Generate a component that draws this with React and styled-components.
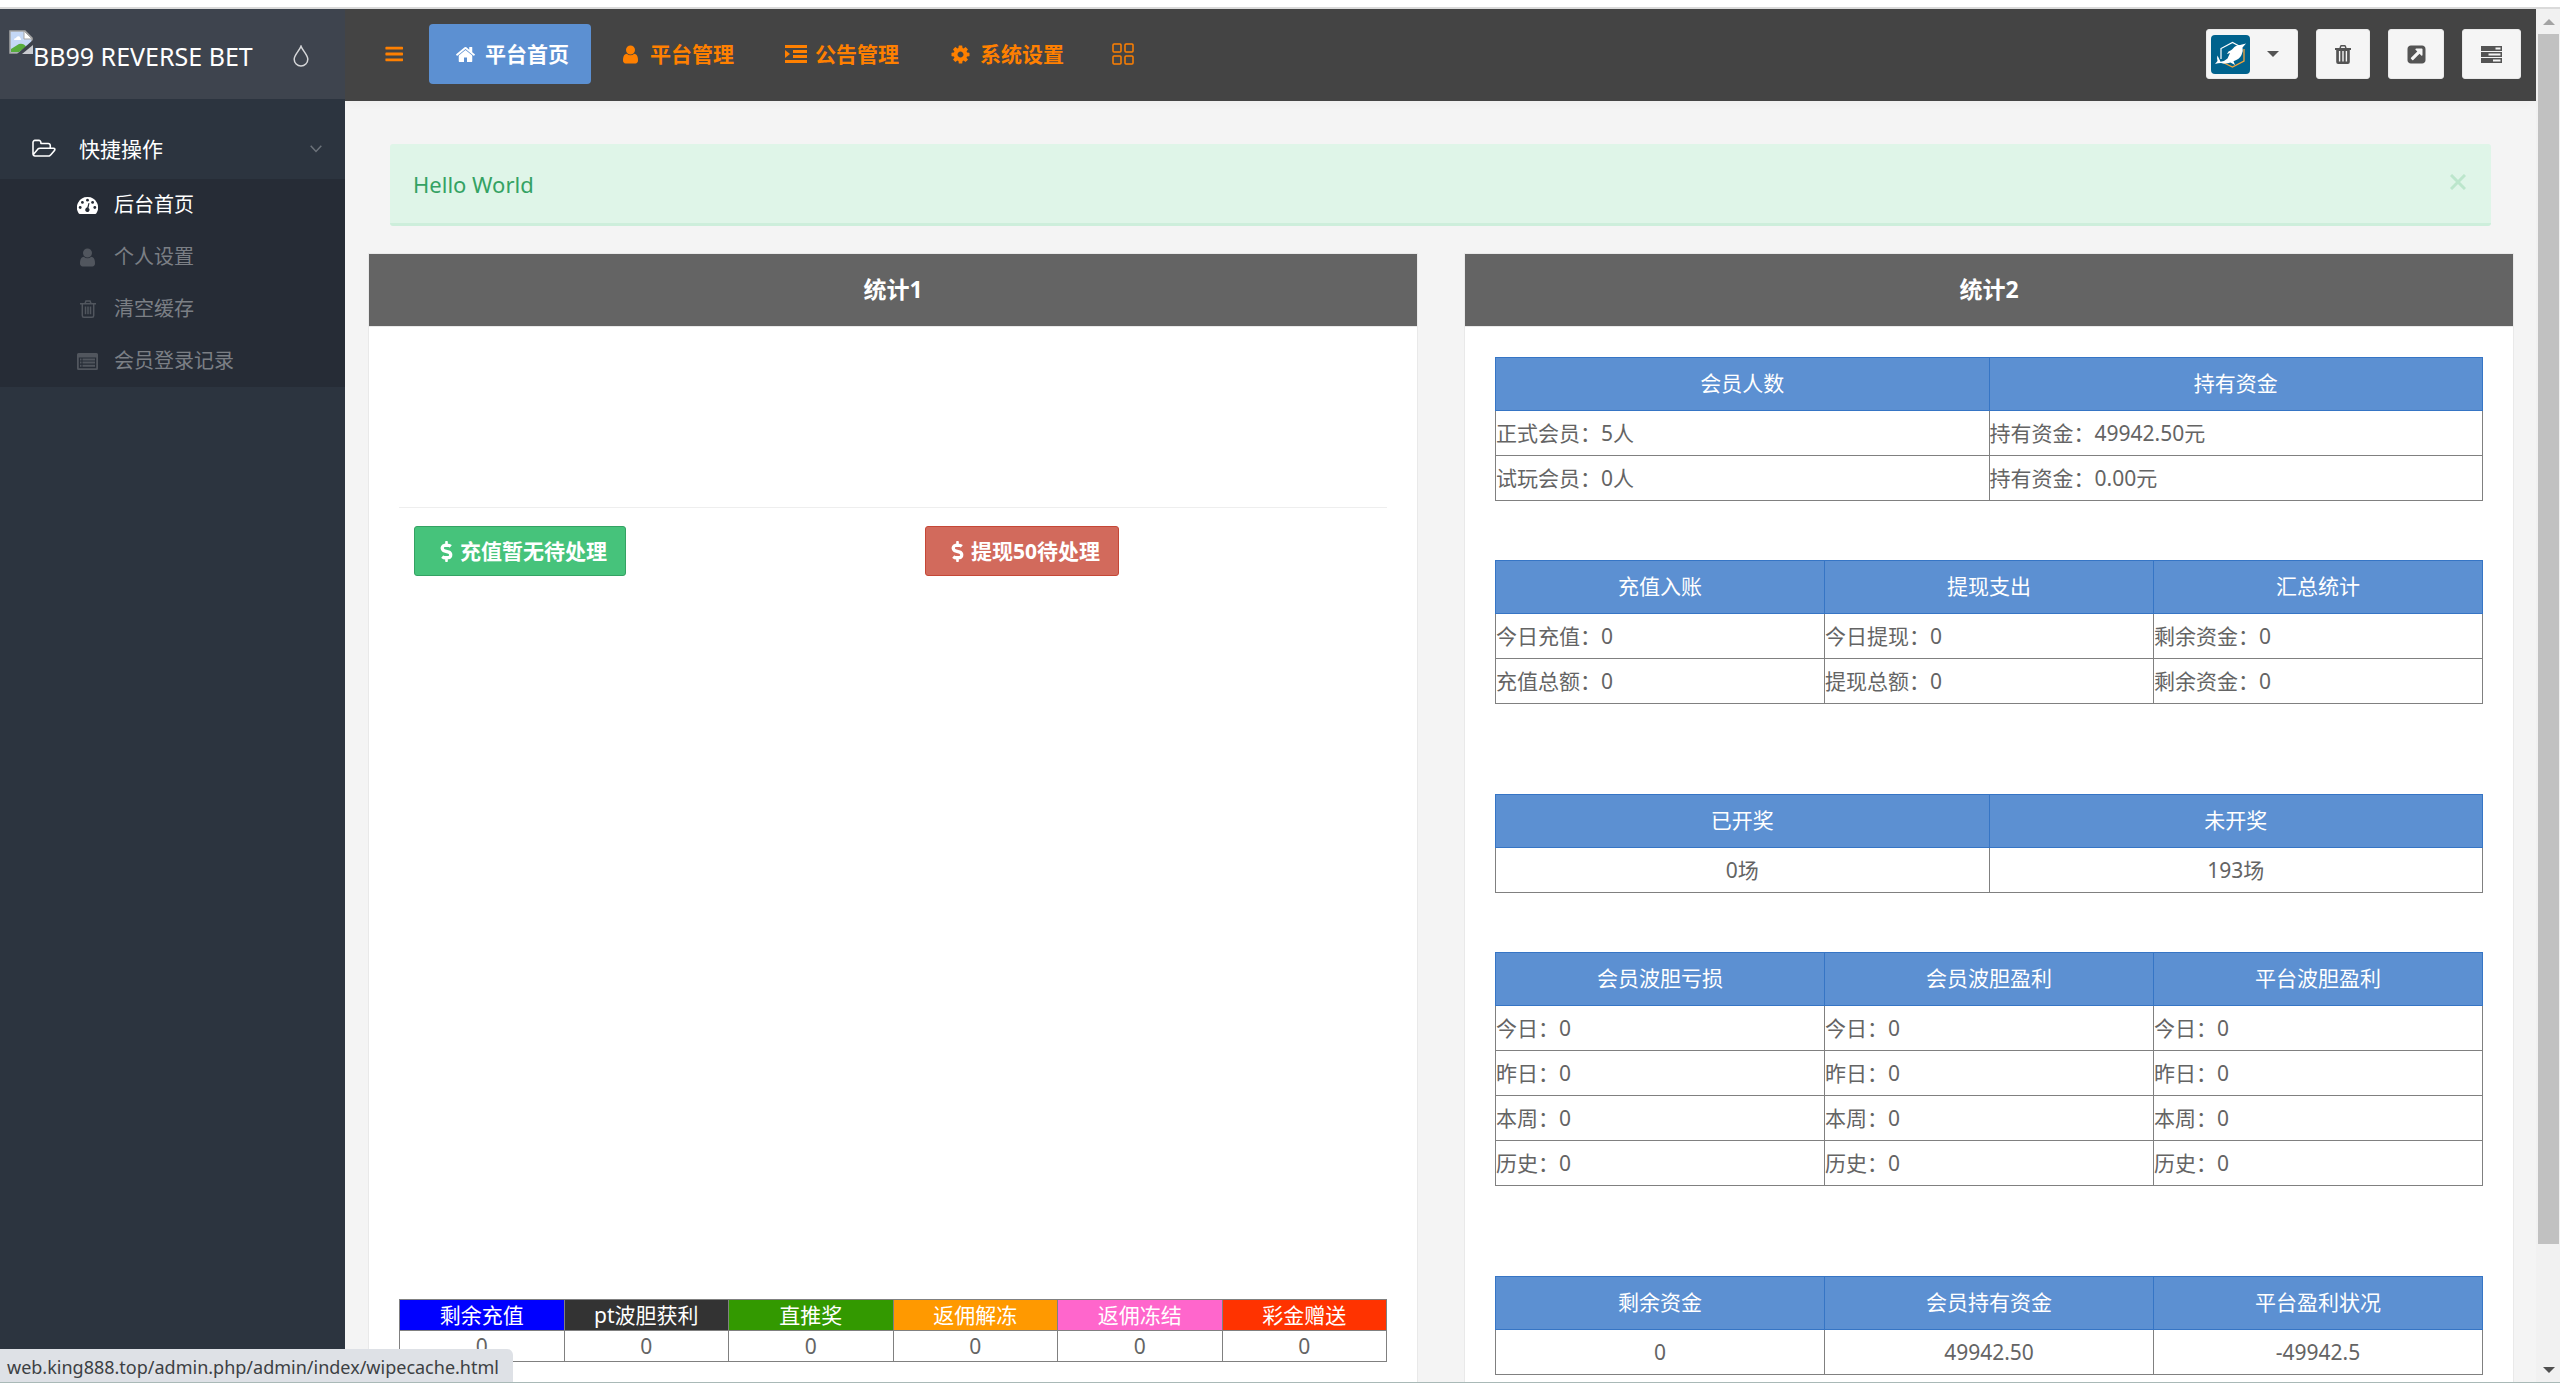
import React from "react";
import styled, { createGlobalStyle, css } from "styled-components";
import { FaDollarSign } from "react-icons/fa";

const GlobalStyle = createGlobalStyle`
  *, *::before, *::after { box-sizing: border-box; }
  body {
    margin: 0;
    background: #fff;
    color: #646464;
    font-family: "Noto Sans", "Noto Sans CJK SC", sans-serif;
    font-size: 21px;
    line-height: 30px;
  }
  button { font: inherit; cursor: pointer; }
  a { color: inherit; text-decoration: none; }
  ul { list-style: none; margin: 0; padding: 0; }
`;

/* ---------- icons ---------- */

const Glyph = styled.svg`
  display: block;
  flex: none;
  fill: currentColor;
`;

const Fixed = styled.span`
  display: flex;
  flex: none;
  justify-content: center;
  width: 27px;
`;

const FA = {
  home: "M1472 992v480q0 26-19 45t-45 19h-384v-384h-256v384h-384q-26 0-45-19t-19-45v-480q0-1 .5-3t.5-3l575-474 575 474q1 2 1 6zm223-69l-62 74q-8 9-21 11h-3q-13 0-21-7l-692-577-692 577q-12 8-24 7-13-2-21-11l-62-74q-8-10-7-23.5t11-21.5l719-599q32-26 76-26t76 26l244 204v-195q0-14 9-23t23-9h192q14 0 23 9t9 23v408l219 182q10 8 11 21.5t-7 23.5z",
  user: "M1536 1399q0 109-62.5 187t-150.5 78h-854q-88 0-150.5-78t-62.5-187q0-85 8.5-160.5t31.5-152 58.5-131 94-89 134.5-34.5q131 128 313 128t313-128q76 0 134.5 34.5t94 89 58.5 131 31.5 152 8.5 160.5zm-256-887q0 159-112.5 271.5t-271.5 112.5-271.5-112.5-112.5-271.5 112.5-271.5 271.5-112.5 271.5 112.5 112.5 271.5z",
  bars: "M1664 1344v128q0 26-19 45t-45 19h-1408q-26 0-45-19t-19-45v-128q0-26 19-45t45-19h1408q26 0 45 19t19 45zm0-512v128q0 26-19 45t-45 19h-1408q-26 0-45-19t-19-45v-128q0-26 19-45t45-19h1408q26 0 45 19t19 45zm0-512v128q0 26-19 45t-45 19h-1408q-26 0-45-19t-19-45v-128q0-26 19-45t45-19h1408q26 0 45 19t19 45z",
  cog: "M1152 896q0-106-75-181t-181-75-181 75-75 181 75 181 181 75 181-75 75-181zm512-109v222q0 12-8 23t-20 13l-185 28q-19 54-39 91 35 50 107 138 10 12 10 25t-9 23q-27 37-99 108t-94 71q-12 0-26-9l-138-108q-44 23-91 38-16 136-29 186-7 28-36 28h-222q-14 0-24.5-8.5t-11.5-21.5l-28-184q-49-16-90-37l-141 107q-10 9-25 9-14 0-25-11-126-114-165-168-7-10-7-23 0-12 8-23 15-21 51-66.5t54-70.5q-27-50-41-99l-183-27q-13-2-21-12.5t-8-23.5v-222q0-12 8-23t19-13l186-28q14-46 39-92-40-57-107-138-10-12-10-24 0-10 9-23 26-36 98.5-107.5t94.5-71.5q13 0 26 10l138 107q44-23 91-38 16-136 29-186 7-28 36-28h222q14 0 24.5 8.5t11.5 21.5l28 184q49 16 90 37l142-107q9-9 24-9 13 0 25 10 129 119 165 170 7 8 7 22 0 12-8 23-15 21-51 66.5t-54 70.5q26 50 41 98l183 28q13 2 21 12.5t8 23.5z",
  folder: "M1717 931q0-35-53-35h-1088q-40 0-85.5 21.5t-71.5 52.5l-294 363q-18 24-18 40 0 35 53 35h1088q40 0 86-22t71-53l294-363q18-22 18-39zm-1141-163h768v-160q0-40-28-68t-68-28h-576q-40 0-68-28t-28-68v-64q0-40-28-68t-68-28h-320q-40 0-68 28t-28 68v853l256-315q44-53 116-87.5t140-34.5zm1269 163q0 62-46 120l-295 363q-43 53-116 87.5t-140 34.5h-1088q-92 0-158-66t-66-158v-960q0-92 66-158t158-66h320q92 0 158 66t66 158v32h544q92 0 158 66t66 158v160h192q54 0 99 24.5t67 70.5q15 32 15 68z",
  external: "M1408 928v-480q0-26-19-45t-45-19h-480q-42 0-59 39-17 41 14 70l144 144-534 534q-19 19-19 45t19 45l102 102q19 19 45 19t45-19l534-534 144 144q18 19 45 19 12 0 25-5 39-17 39-59zm256-512v960q0 119-84.5 203.5t-203.5 84.5h-960q-119 0-203.5-84.5t-84.5-203.5v-960q0-119 84.5-203.5t203.5-84.5h960q119 0 203.5 84.5t84.5 203.5z",
};

const FaGlyph = ({ name, size = 21, box = "0 0 1792 1792", width }) => (
  <Glyph width={width || size} height={size} viewBox={box} aria-hidden="true">
    <path d={FA[name]} />
  </Glyph>
);

const IndentIcon = () => (
  <Glyph width="22" height="18" viewBox="0 0 22 18" aria-hidden="true">
    <path d="M0 0h22v3H0zM8 5h14v3H8zM8 10h14v3H8zM0 15h22v3H0zM0 5l5 4-5 4z" />
  </Glyph>
);

const GridIcon = () => (
  <Glyph width="22" height="22" viewBox="0 0 22 22" aria-hidden="true">
    <g fill="none" stroke="currentColor" strokeWidth="1.5">
      <rect x="1" y="1" width="8" height="8" rx="1" />
      <rect x="13" y="1" width="8" height="8" rx="1" />
      <rect x="1" y="13" width="8" height="8" rx="1" />
      <rect x="13" y="13" width="8" height="8" rx="1" />
    </g>
  </Glyph>
);

const DropIcon = () => (
  <Glyph width="16" height="22" viewBox="0 0 16 22" aria-hidden="true">
    <path
      d="M8 1.2C6.4 5.6 1.2 9.8 1.2 14.2a6.8 6.8 0 0 0 13.6 0C14.8 9.8 9.6 5.6 8 1.2z"
      fill="none"
      stroke="currentColor"
      strokeWidth="1.5"
    />
  </Glyph>
);

const GaugeIcon = () => (
  <Glyph width="21" height="17" viewBox="0 0 21 17" aria-hidden="true">
    <path d="M10.5 0A10.5 10.5 0 0 0 1.6 16.2Q2 17 2.8 17H18.2Q19 17 19.4 16.2A10.5 10.5 0 0 0 10.5 0z" />
    <g fill="#262c36">
      <circle cx="3.2" cy="10.5" r="1.4" />
      <circle cx="5.4" cy="5.4" r="1.4" />
      <circle cx="10.5" cy="3.2" r="1.4" />
      <circle cx="15.6" cy="5.4" r="1.4" />
      <circle cx="17.8" cy="10.5" r="1.4" />
      <path d="M11.5 6l1 .3-1 4.6a2.2 2.2 0 1 1-1.3-.3z" />
    </g>
  </Glyph>
);

const TrashOutline = () => (
  <Glyph width="16" height="18" viewBox="0 0 16 18" aria-hidden="true">
    <g fill="none" stroke="currentColor" strokeWidth="1.5">
      <path d="M0 3.7h16M5 3.5l1-2.6h4l1 2.6M2.3 4v11.4q0 1.8 1.6 1.8h8.2q1.6 0 1.6-1.8V4" />
      <path d="M5.5 6.5v7.8M8 6.5v7.8M10.5 6.5v7.8" />
    </g>
  </Glyph>
);

const TrashSolid = () => (
  <Glyph width="16" height="19" viewBox="0 0 16 19" aria-hidden="true">
    <path
      fillRule="evenodd"
      d="M0 3h4.4l.6-2q.3-1 1.3-1h3.4q1 0 1.3 1l.6 2H16v2h-1.2v12q0 2-2 2H3.2q-2 0-2-2V5H0zM5.900 3h4.200l-.5-1.500H6.400zM3.900 6v10.500h1.400V6zM7.300 6v10.500h1.400V6zM10.700 6v10.500h1.400V6z"
    />
  </Glyph>
);

const ListAltIcon = () => (
  <Glyph width="21" height="17" viewBox="0 0 21 17" aria-hidden="true">
    <path
      fillRule="evenodd"
      d="M1.5 0h18Q21 0 21 1.5v14q0 1.5-1.5 1.5h-18Q0 17 0 15.5v-14Q0 0 1.5 0zM1.800 4.500v10.700h17.400V4.500z"
    />
    <path d="M3 5.500h1.500v2H3zM5.500 5.500H18v2H5.500zM3 8.600h1.500v2H3zM5.500 8.600H18v2H5.500zM3 11.700h1.500v2H3zM5.500 11.700H18v2H5.500z" />
  </Glyph>
);

const TasksIcon = () => (
  <Glyph width="21" height="17" viewBox="0 0 21 17" aria-hidden="true">
    <path
      fillRule="evenodd"
      d="M0 0h21v5H0zM14.500 1.600v1.800h5V1.600zM0 6h21v5H0zM7.500 7.600v1.800h12V7.600zM0 12h21v5H0zM12 13.600v1.800h7.500v-1.800z"
    />
  </Glyph>
);

const ChevronIcon = () => (
  <Glyph width="12" height="8" viewBox="0 0 12 8" aria-hidden="true">
    <path d="M.7.7L6 6.5 11.3.7" fill="none" stroke="currentColor" strokeWidth="1.5" />
  </Glyph>
);

const CloseIcon = () => (
  <Glyph width="16" height="16" viewBox="0 0 16 16" aria-hidden="true">
    <path d="M1 1l14 14M15 1L1 15" stroke="currentColor" strokeWidth="3" />
  </Glyph>
);

const CaretIcon = ({ up }) => (
  <Glyph width="12" height="6" viewBox="0 0 12 6" aria-hidden="true">
    <path d={up ? "M0 6h12L6 0z" : "M0 0h12L6 6z"} />
  </Glyph>
);

const BrokenImage = () => (
  <Glyph width="24" height="24" viewBox="0 0 24 24" aria-hidden="true">
    <path d="M1 1h15l7 7v8l-13 7H1z" fill="#c4d8f6" stroke="#a5a5a5" strokeWidth="1.5" />
    <path d="M15 1v8h8z" fill="#fff" stroke="#a5a5a5" strokeWidth="1" />
    <path d="M5 10q0-2 2-2 1-2.5 3.5-1.5Q12 8 12 10z" fill="#fff" />
    <path d="M2 22v-3l8-5q5-1 7 3l-7 5z" fill="#57ad3c" />
    <path d="M24 13v11H11z" fill="#c9ccd0" />
    <path d="M24 10v5L13 24H8z" fill="#3d434d" />
  </Glyph>
);

const DolphinLogo = () => (
  <Glyph width="39" height="39" viewBox="0 0 39 39" role="img" aria-label="avatar">
    <rect width="39" height="39" rx="4" fill="#00628d" />
    <path d="M10 24V13.5L21.5 7.5 30 12" fill="none" stroke="#fff" strokeWidth="1.2" />
    <path d="M33 14v12L21.5 32 12 27.5" fill="none" stroke="#f2a33a" strokeWidth="1.3" />
    <path
      d="M35 8.500L29 10q-4.500.3-7 3.500-1 1-2 1.700-3 .8-4 3.800l3-1-2.500 5.500q-3 3-7 3.200L6.500 20.500q-1 2.500 0 5.500L4 29q3-1 6-1 5 1.300 9.500-.5l4.500 2.500-1.500-3.800q6-2 8-6.200 2-4 1-7.500z"
      fill="#fff"
    />
  </Glyph>
);

/* ---------- frame ---------- */

const Screen = styled.div`
  display: flex;
  flex-direction: column;
  height: 100vh;
  overflow: hidden;
  border-bottom: 1px solid #a9b9b7;
  position: relative;
`;

const TopStrip = styled.div`
  flex: none;
  height: 9px;
  border-bottom: 2px solid #dadada;
  background: #fff;
`;

const Shell = styled.div`
  display: flex;
  flex: 1;
  min-height: 0;
`;

/* ---------- sidebar ---------- */

const Sidebar = styled.aside`
  flex: none;
  width: 345px;
  background: #2c343f;
  color: #fff;
`;

const Brand = styled.div`
  display: flex;
  justify-content: space-between;
  height: 90px;
  padding: 21px 36px 0 9px;
  background: #3e444e;
`;

const BrandLink = styled.a`
  display: flex;
  align-items: flex-start;
  font-size: 25px;
  line-height: 52px;
  white-space: nowrap;
`;

const PlainButton = styled.button`
  display: flex;
  align-items: center;
  justify-content: center;
  padding: 0;
  border: 0;
  background: none;
  color: inherit;
`;

const ThemeButton = styled(PlainButton)`
  height: 52px;
  color: #d6d7d9;
`;

const SideNav = styled.nav`
  padding-top: 20px;
`;

const GroupButton = styled(PlainButton)`
  width: 100%;
  height: 60px;
  padding: 0 23px 0 30px;
  justify-content: flex-start;
  gap: 22px;

  & > :last-child {
    margin-left: auto;
    color: #6c727a;
  }
`;

const SubMenu = styled.ul`
  background: #262c36;
`;

const SubLink = styled.a`
  display: flex;
  align-items: center;
  gap: 13px;
  height: 52px;
  padding-left: 74px;
  font-size: 20px;
  color: ${(p) => (p.$active ? "#fff" : "#7b7f85")};

  svg {
    color: ${(p) => (p.$active ? "#fff" : "#51565e")};
  }
`;

/* ---------- header ---------- */

const Main = styled.main`
  flex: 1;
  min-width: 0;
  overflow: hidden;
  background: #f4f4f4;
`;

const Header = styled.header`
  display: flex;
  justify-content: space-between;
  height: 92px;
  padding: 15px 15px 0 35px;
  background: #444;
  box-shadow: 0 2px 10px rgba(0, 0, 0, 0.03);
`;

const TopNav = styled.nav`
  display: flex;
  gap: 3px;
  height: 60px;
  color: #ff8000;
`;

const MenuToggle = styled(PlainButton)`
  width: 24px;
  margin-right: 22px;
`;

const NavLink = styled.a`
  display: flex;
  align-items: center;
  gap: 6px;
  padding: 0 22px 0 23px;
  border-radius: 4px;
  font-weight: 700;
  white-space: nowrap;
  ${(p) =>
    p.$active &&
    css`
      background: #5c90d2;
      color: #fff;
    `}
`;

const Tools = styled.div`
  display: flex;
  align-items: flex-start;
  gap: 18px;
  padding-top: 5px;
`;

const ToolButton = styled(PlainButton)`
  width: ${(p) => p.$width}px;
  height: 50px;
  border: 1px solid #e9e9e9;
  border-radius: 3px;
  background: #f5f5f5;
  color: #545454;
`;

const AvatarButton = styled(ToolButton)`
  justify-content: flex-start;
  gap: 17px;
  padding-left: 4px;
`;

/* ---------- content ---------- */

const Content = styled.div`
  padding: 43px 22px 0 23px;
`;

const Alert = styled.div`
  display: flex;
  align-items: center;
  justify-content: space-between;
  height: 82px;
  margin: 0 23px 27px 22px;
  padding: 0 25px 0 23px;
  border-bottom: 3px solid #cdeedb;
  border-radius: 3px;
  background: #dff5e8;
  color: #34a263;
  font-size: 22px;
`;

const CloseButton = styled(PlainButton)`
  padding-bottom: 3px;
  color: #bce6cc;
`;

const Panels = styled.div`
  display: grid;
  grid-template-columns: 1fr 1fr;
  gap: 46px;
`;

const Panel = styled.section`
  min-height: 100vh;
  border: 1px solid #e9e9e9;
  background: #fff;
`;

const PanelTitle = styled.h3`
  margin: 0;
  padding: 20px 0 22px;
  border-bottom: 1px solid #e9e9e9;
  background: #646464;
  color: #fff;
  font-size: 23px;
  line-height: 30px;
  font-weight: 700;
  text-align: center;
`;

const PanelBody = styled.div`
  padding: 30px;
`;

const ChartArea = styled.div`
  height: ${(p) => p.$height}px;
`;

const Divider = styled.hr`
  margin: 0 0 18px;
  border: 0;
  border-top: 1px solid #eee;
`;

const Actions = styled.div`
  display: grid;
  grid-template-columns: 1fr 1fr;
  gap: 64px;
  padding: 0 15px;
`;

const ActionButton = styled.button`
  display: flex;
  align-items: center;
  justify-self: start;
  height: 50px;
  padding: 0 18px;
  border: 1px solid ${(p) => (p.$danger ? "#c54736" : "#34a263")};
  border-radius: 3px;
  background: ${(p) => (p.$danger ? "#d26a5c" : "#46c37b")};
  color: #fff;
  font-weight: 700;
  white-space: nowrap;
`;

const SummaryTable = styled.table`
  width: 100%;
  table-layout: fixed;
  border-collapse: collapse;
  text-align: center;

  th, td {
    height: 31px;
    padding: 0;
    border: 1px solid #808080;
    font-weight: 400;
    line-height: 28px;
  }
`;

const ColorHead = styled.th`
  background: ${(p) => p.$color};
  color: #fff;
`;

const StatStack = styled.div`
  display: flex;
  flex-direction: column;
`;

const StatTable = styled.table`
  width: 100%;
  margin-top: ${(p) => p.$space}px;
  table-layout: fixed;
  border-collapse: collapse;

  th {
    height: 53px;
    padding: 0 0 3px;
    border: 1px solid #3675c5;
    background: #5c90d2;
    color: #fff;
    font-weight: 400;
  }

  td {
    height: 45px;
    padding: 0;
    border: 1px solid #808080;
    text-align: ${(p) => (p.$center ? "center" : "left")};
  }
`;

/* ---------- scrollbar and status ---------- */

const ScrollRail = styled.div`
  display: flex;
  flex-direction: column;
  flex: none;
  width: 24px;
  padding: 0 1px 0 2px;
  background: #f1f1f1;
`;

const RailArrow = styled.div`
  display: flex;
  flex: none;
  align-items: center;
  justify-content: center;
  height: 25px;
  color: ${(p) => (p.$off ? "#a3a3a3" : "#505050")};
`;

const RailThumb = styled.div`
  flex: 1210;
  background: #c1c1c1;
`;

const RailRest = styled.div`
  flex: 113;
`;

const StatusBubble = styled.div`
  position: absolute;
  left: 0;
  bottom: 0;
  height: 33px;
  padding: 0 14px 0 7px;
  border-radius: 0 6px 0 0;
  background: #dee1e6;
  color: #3c4043;
  font-size: 18px;
  line-height: 37px;
  white-space: nowrap;
`;

/* ---------- data ---------- */

const sideItems = [
  { label: "后台首页", icon: <GaugeIcon />, active: true },
  { label: "个人设置", icon: <FaGlyph name="user" /> },
  { label: "清空缓存", icon: <TrashOutline /> },
  { label: "会员登录记录", icon: <ListAltIcon /> },
];

const navItems = [
  { label: "平台首页", icon: <FaGlyph name="home" />, active: true },
  { label: "平台管理", icon: <FaGlyph name="user" /> },
  { label: "公告管理", icon: <IndentIcon /> },
  { label: "系统设置", icon: <FaGlyph name="cog" /> },
];

const summary = [
  { label: "剩余充值", color: "#0000ff" },
  { label: "pt波胆获利", color: "#333333" },
  { label: "直推奖", color: "#339900" },
  { label: "返佣解冻", color: "#ff9900" },
  { label: "返佣冻结", color: "#ff66cc" },
  { label: "彩金赠送", color: "#ff3300" },
];

const stats = [
  {
    space: 0,
    head: ["会员人数", "持有资金"],
    rows: [
      ["正式会员：5人", "持有资金：49942.50元"],
      ["试玩会员：0人", "持有资金：0.00元"],
    ],
  },
  {
    space: 59,
    head: ["充值入账", "提现支出", "汇总统计"],
    rows: [
      ["今日充值：0", "今日提现：0", "剩余资金：0"],
      ["充值总额：0", "提现总额：0", "剩余资金：0"],
    ],
  },
  { space: 90, center: true, head: ["已开奖", "未开奖"], rows: [["0场", "193场"]] },
  {
    space: 59,
    head: ["会员波胆亏损", "会员波胆盈利", "平台波胆盈利"],
    rows: ["今日", "昨日", "本周", "历史"].map((d) => Array(3).fill(`${d}：0`)),
  },
  {
    space: 90,
    center: true,
    head: ["剩余资金", "会员持有资金", "平台盈利状况"],
    rows: [["0", "49942.50", "-49942.5"]],
  },
];

export default function App() {
  return (
    <Screen>
      <GlobalStyle />
      <TopStrip />
      <Shell>
        <Sidebar>
          <Brand>
            <BrandLink href="#">
              <BrokenImage />
              <span>BB99 REVERSE BET</span>
            </BrandLink>
            <ThemeButton type="button" aria-label="theme">
              <DropIcon />
            </ThemeButton>
          </Brand>
          <SideNav>
            <GroupButton type="button">
              <Fixed>
                <FaGlyph name="folder" size={22} width={24} box="-64 0 1920 1792" />
              </Fixed>
              <span>快捷操作</span>
              <ChevronIcon />
            </GroupButton>
            <SubMenu>
              {sideItems.map((i) => (
                <li key={i.label}>
                  <SubLink href="#" $active={i.active}>
                    <Fixed>{i.icon}</Fixed>
                    {i.label}
                  </SubLink>
                </li>
              ))}
            </SubMenu>
          </SideNav>
        </Sidebar>

        <Main>
          <Header>
            <TopNav>
              <MenuToggle type="button" aria-label="menu">
                <FaGlyph name="bars" size={22} box="-256 0 1920 1792" />
              </MenuToggle>
              {navItems.map((i) => (
                <NavLink key={i.label} href="#" $active={i.active}>
                  <Fixed>{i.icon}</Fixed>
                  {i.label}
                </NavLink>
              ))}
              <NavLink href="#" aria-label="grid">
                <GridIcon />
              </NavLink>
            </TopNav>
            <Tools>
              <AvatarButton type="button" $width={92}>
                <DolphinLogo />
                <CaretIcon />
              </AvatarButton>
              <ToolButton type="button" $width={54} aria-label="trash">
                <TrashSolid />
              </ToolButton>
              <ToolButton type="button" $width={56} aria-label="open">
                <FaGlyph name="external" />
              </ToolButton>
              <ToolButton type="button" $width={59} aria-label="tasks">
                <TasksIcon />
              </ToolButton>
            </Tools>
          </Header>

          <Content>
            <Alert role="alert">
              <span>Hello World</span>
              <CloseButton type="button" aria-label="close">
                <CloseIcon />
              </CloseButton>
            </Alert>
            <Panels>
              <Panel>
                <PanelTitle>统计1</PanelTitle>
                <PanelBody>
                  <ChartArea $height={150} />
                  <Divider />
                  <Actions>
                    <ActionButton type="button">
                      <Fixed><FaDollarSign /></Fixed>
                      充值暂无待处理
                    </ActionButton>
                    <ActionButton type="button" $danger>
                      <Fixed><FaDollarSign /></Fixed>
                      提现50待处理
                    </ActionButton>
                  </Actions>
                  <ChartArea $height={723} />
                  <SummaryTable>
                    <thead>
                      <tr>
                        {summary.map((s) => (
                          <ColorHead key={s.label} $color={s.color}>{s.label}</ColorHead>
                        ))}
                      </tr>
                    </thead>
                    <tbody>
                      <tr>
                        {summary.map((s) => (
                          <td key={s.label}>0</td>
                        ))}
                      </tr>
                    </tbody>
                  </SummaryTable>
                </PanelBody>
              </Panel>
              <Panel>
                <PanelTitle>统计2</PanelTitle>
                <PanelBody>
                  <StatStack>
                    {stats.map((t) => (
                      <StatTable key={t.head[0]} $space={t.space} $center={t.center}>
                        <thead>
                          <tr>
                            {t.head.map((h) => (
                              <th key={h}>{h}</th>
                            ))}
                          </tr>
                        </thead>
                        <tbody>
                          {t.rows.map((r, ri) => (
                            <tr key={ri}>
                              {r.map((c, ci) => (
                                <td key={ci}>{c}</td>
                              ))}
                            </tr>
                          ))}
                        </tbody>
                      </StatTable>
                    ))}
                  </StatStack>
                </PanelBody>
              </Panel>
            </Panels>
          </Content>
        </Main>

        <ScrollRail aria-hidden="true">
          <RailArrow $off>
            <CaretIcon up />
          </RailArrow>
          <RailThumb />
          <RailRest />
          <RailArrow>
            <CaretIcon />
          </RailArrow>
        </ScrollRail>
      </Shell>
      <StatusBubble>web.king888.top/admin.php/admin/index/wipecache.html</StatusBubble>
    </Screen>
  );
}
